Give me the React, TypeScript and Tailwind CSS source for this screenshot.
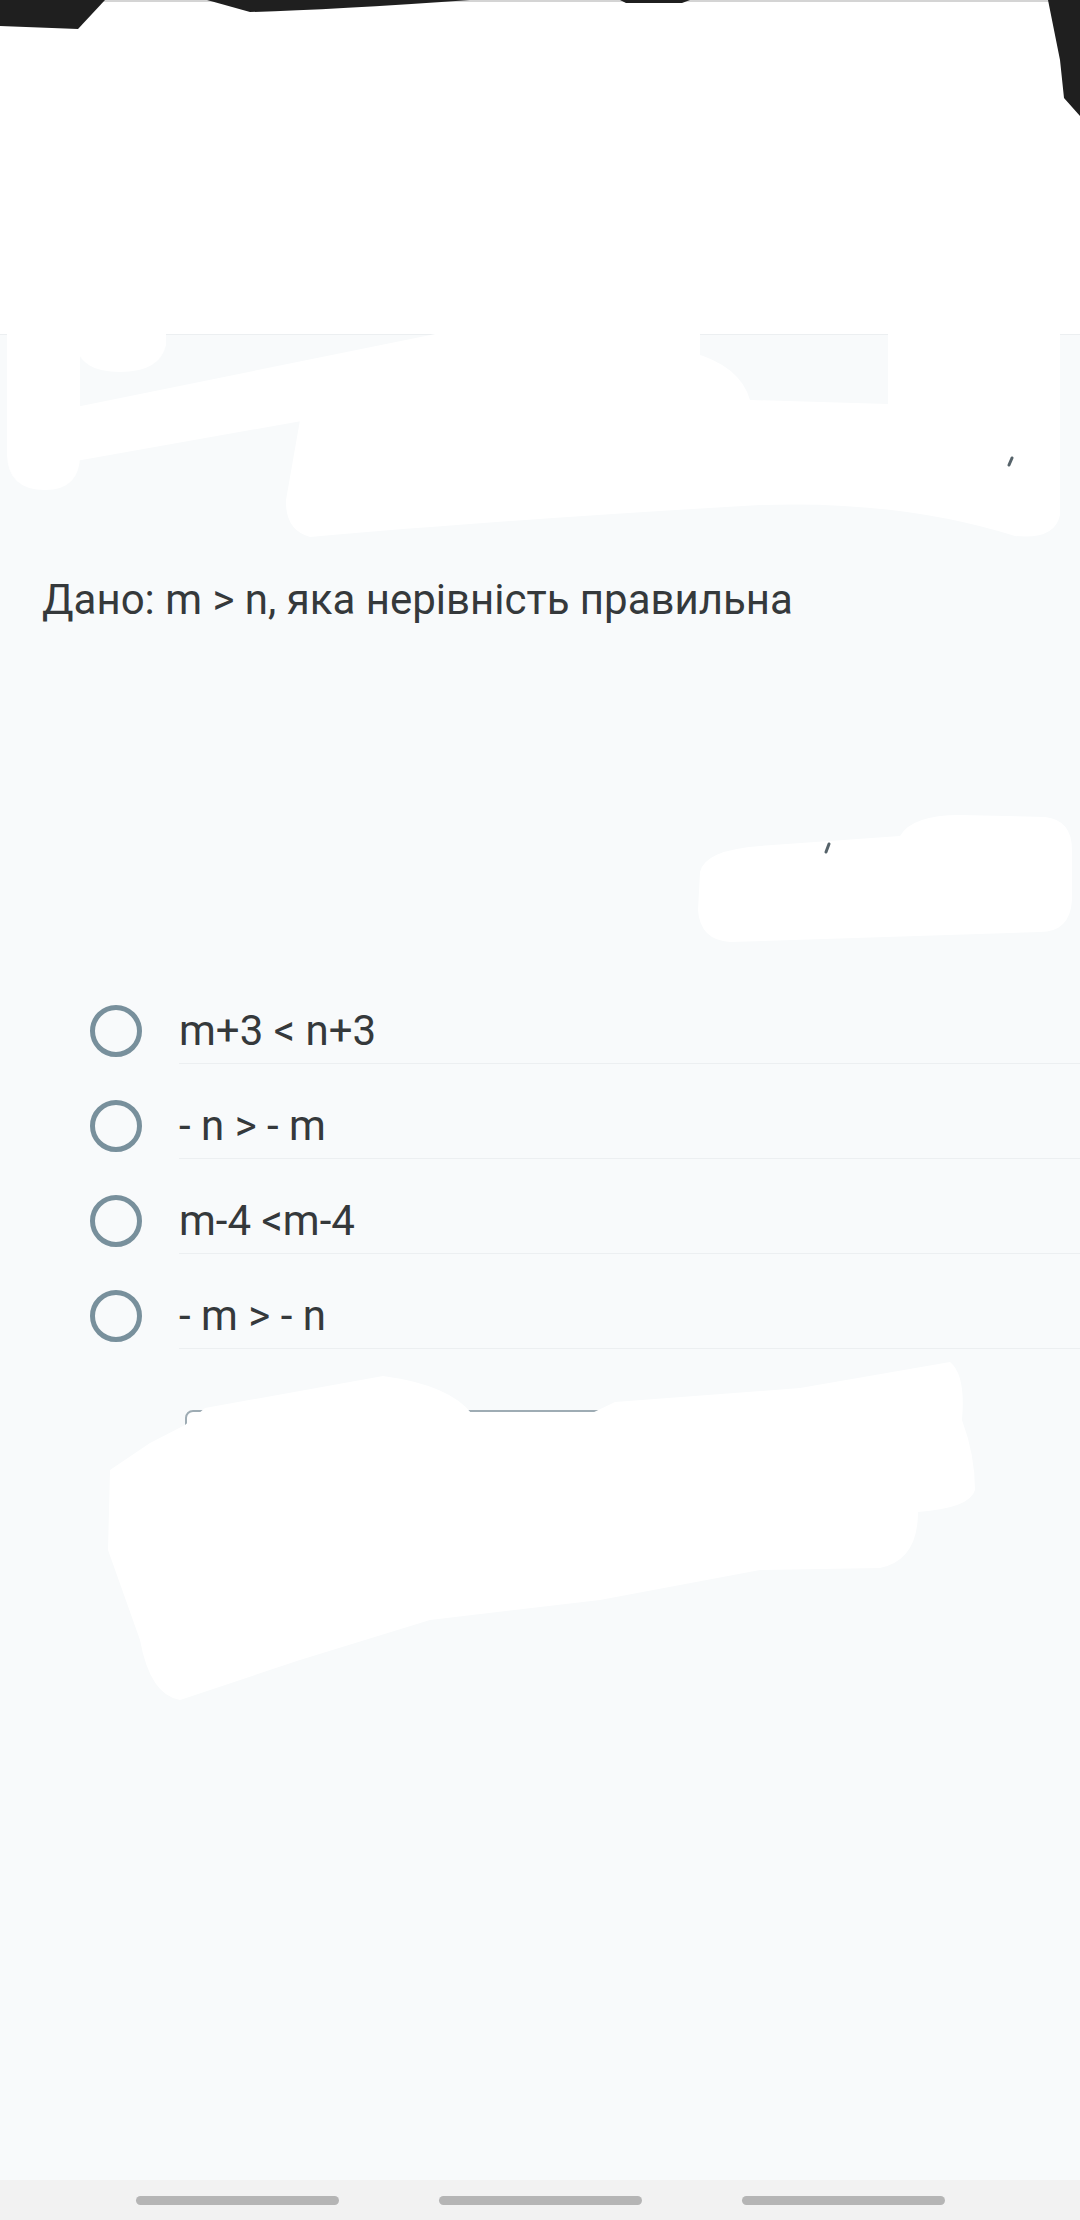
const options = ["m+3 < n+3", "- n > - m", "m-4 <m-4", "- m > - n"];

function Scribbles() {
  // redaction marks drawn over the screenshot
  return (
    <svg
      className="absolute inset-0 pointer-events-none"
      width="1080"
      height="2220"
      viewBox="0 0 1080 2220"
    >
      <g fill="#1f1f1f">
        <path d="M0,0 H105 L78,29 L0,26 Z" />
        <path d="M207,0 L250,12 Q330,10 470,0 Z" />
        <path d="M620,0 H690 L682,3 H626 Z" />
        <path d="M1048,0 H1080 V116 L1064,98 L1060,60 Z" />
      </g>
      <g fill="#ffffff">
        <path d="M7,330 H80 V455 Q80,490 45,490 Q8,490 7,455 Z" />
        <path d="M76,330 H166 V345 Q160,372 120,372 Q80,372 76,345 Z" />
        <path d="M76,407 L455,330 H700 V400 L358,411 L76,461 Z" />
        <path d="M300,420 Q330,400 450,395 L690,352 Q740,365 750,400 L888,404 V330 H1060 V515 Q1055,540 1015,536 Q900,500 760,505 Q500,520 310,537 Q285,530 286,500 Z" />
        <path d="M700,872 Q705,850 760,846 L900,836 Q912,815 960,815 L1045,817 Q1072,820 1072,850 V900 Q1070,932 1040,932 L730,942 Q700,940 698,910 Z" />
        <path d="M108,1550 L110,1470 L150,1443 L185,1425 L205,1408 L383,1376 Q450,1385 472,1414 L590,1414 L615,1402 L800,1388 L950,1362 Q966,1375 962,1420 Q975,1455 975,1490 Q970,1508 918,1512 Q918,1560 880,1568 L760,1570 L600,1600 L430,1620 L300,1660 L180,1700 Q150,1695 140,1640 Z" />
      </g>
      <g stroke="#56636a" strokeWidth="3" strokeLinecap="round">
        <line x1="826" y1="852" x2="829" y2="844" />
        <line x1="1009" y1="465" x2="1012" y2="458" />
      </g>
    </svg>
  );
}

export default function App() {
  return (
    <div
      className="relative w-[1080px] h-[2220px] overflow-hidden bg-[#f8fafb] flex flex-col text-[#35393b]"
      style={{ fontFamily: "Roboto, 'Noto Sans', sans-serif" }}
    >
      <header className="h-[335px] shrink-0 bg-white border-t-2 border-t-[#d4d4d4] border-b border-b-[#eceff1]" />

      <main className="flex-1">
        <p className="mt-[239px] ml-[42px] text-[42px] leading-[52px]">
          Дано: m &gt; n, яка нерівність правильна
        </p>

        <div className="mt-[343px]">
          {options.map((opt) => (
            <div key={opt} className="flex items-start pl-[90px]">
              <div className="mt-[36px] w-[52px] h-[52px] shrink-0 rounded-full border-[5px] border-[#78909c]" />
              <div className="ml-[37px] flex-1 pt-[36px] pb-[6px] border-b border-[#eceff1]">
                <span className="block text-[42px] leading-[52px]">{opt}</span>
              </div>
            </div>
          ))}
        </div>

        <div className="mt-[61px] ml-[185px] w-[700px] h-[120px] rounded-[8px] border-2 border-[#9eacb4] bg-white" />
      </main>

      <nav className="h-[40px] shrink-0 bg-[#f2f2f2] flex items-center justify-center gap-[100px]">
        <div className="w-[203px] h-[9px] rounded-full bg-[#b5b5b5]" />
        <div className="w-[203px] h-[9px] rounded-full bg-[#b5b5b5]" />
        <div className="w-[203px] h-[9px] rounded-full bg-[#b5b5b5]" />
      </nav>

      <Scribbles />
    </div>
  );
}
